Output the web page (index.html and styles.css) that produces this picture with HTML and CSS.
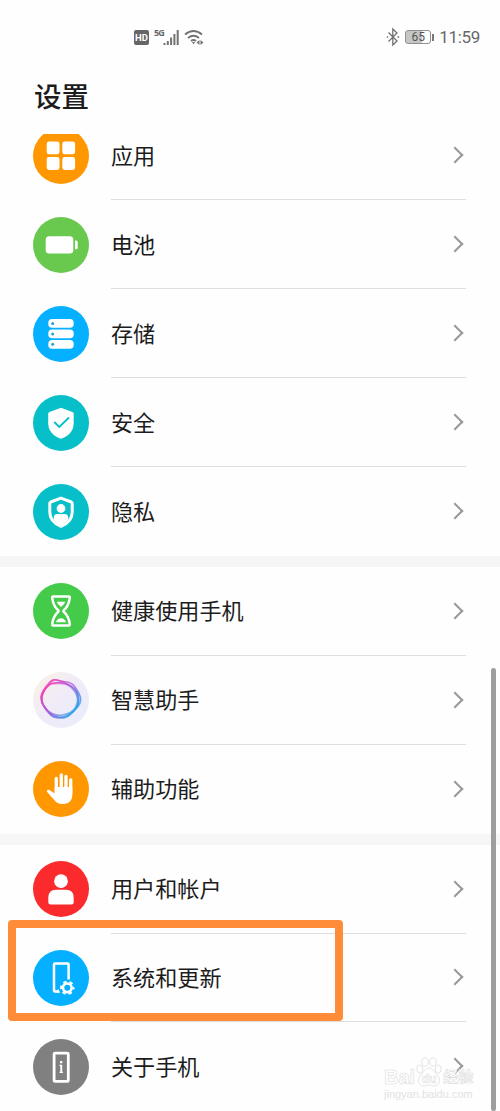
FILE: index.html
```html
<!DOCTYPE html>
<html lang="zh-CN">
<head>
  <meta charset="UTF-8" />
  <meta name="viewport" content="width=device-width, initial-scale=1.0" />
  <title>设置</title>
  <link rel="stylesheet" href="styles.css">
</head>
<body>

  <div class="screen">
    <div class="status-bar">
      <div class="status-left">
        <span class="hd">HD</span>
        <span class="net">5G</span>
        <svg class="signal" width="17" height="17" viewBox="0 0 17 17">
          <path d="M1.5 14v2M4.8 12v4M8.1 8.500v7.500M11.400 5v11M14.700 1v15" />
        </svg>
        <svg class="wifi" width="20" height="17" viewBox="0 0 20 17">
          <path d="M1 5.500Q9.500-1.500 18 5.500M4 9q5.500-4.500 11 0M7 12q2.500-2 5 0" />
          <path class="fill" d="M8 13h3l-1.500 2.500zM15.500 11v5l-3-2.500zM16.500 11v5l3-2.500z" />
        </svg>
      </div>
      <div class="status-right">
        <svg class="bluetooth" width="14" height="20" viewBox="0 0 14 20">
          <path d="M2.500 5.500l8.500 8.500-4.200 4V2L11 6l-8.500 8.500" />
          <path d="M.8 10h1.400M11.500 10h1.700" />
        </svg>
        <span class="battery"><span class="battery-level">65</span></span>
        <span class="time">11:59</span>
      </div>
    </div>

    <h1>设置</h1>

    <div class="list">
      <div class="group">
        <div class="row">
          <svg class="icon" viewBox="0 0 56 56">
            <circle cx="28" cy="28" r="28" fill="#ff9800" />
            <g fill="#fff">
              <rect x="13.700" y="13.500" width="12.800" height="12.800" rx="2.400" />
              <rect x="29.300" y="13.500" width="12.800" height="12.800" rx="2.400" />
              <rect x="13.700" y="29.100" width="12.800" height="12.800" rx="2.400" />
              <rect x="29.300" y="29.100" width="12.800" height="12.800" rx="2.400" />
            </g>
          </svg>
          <div class="item"><span>应用</span><i class="arrow"></i></div>
        </div>
        <div class="row">
          <svg class="icon" viewBox="0 0 56 56">
            <circle cx="28" cy="28" r="28" fill="#69c94f" />
            <rect x="12.700" y="19.200" width="27.600" height="17.400" rx="3.500" fill="#fff" />
            <path d="M42 23.500h1.200q1.500 0 1.500 1.500v5.700q0 1.500-1.500 1.500H42z" fill="#fff" />
          </svg>
          <div class="item"><span>电池</span><i class="arrow"></i></div>
        </div>
        <div class="row">
          <svg class="icon" viewBox="0 0 56 56">
            <circle cx="28" cy="28" r="28" fill="#04b0ff" />
            <g fill="#fff">
              <rect x="15.300" y="13" width="25.400" height="8.700" rx="3.800" />
              <rect x="15.300" y="23.500" width="25.400" height="8.700" rx="3.800" />
              <rect x="15.300" y="34" width="25.400" height="8.700" rx="3.800" />
            </g>
            <g fill="#2b9fce">
              <circle cx="19.700" cy="17.400" r="1.500" />
              <circle cx="19.700" cy="27.900" r="1.500" />
              <circle cx="19.700" cy="38.300" r="1.500" />
            </g>
          </svg>
          <div class="item"><span>存储</span><i class="arrow"></i></div>
        </div>
        <div class="row">
          <svg class="icon" viewBox="0 0 56 56">
            <circle cx="28" cy="28" r="28" fill="#06bfc8" />
            <path d="M28 12.700l11.400 4.200q1.300.5 1.300 1.800v9.500c0 8-5.500 13-12.700 15.600C20.800 41.200 15.200 36.200 15.200 28.200v-9.500q0-1.300 1.300-1.800z" fill="#fff" />
            <path d="M21.300 27l5 5 9.700-9.500" fill="none" stroke="#06bfc8" stroke-width="1.900" />
          </svg>
          <div class="item"><span>安全</span><i class="arrow"></i></div>
        </div>
        <div class="row">
          <svg class="icon" viewBox="0 0 56 56">
            <circle cx="28" cy="28" r="28" fill="#06bfc8" />
            <path d="M28 14.200l10.300 3.800q.9.400.9 1.400v8.900c0 7-4.600 11.400-11.200 14-6.600-2.600-11.200-7-11.200-14v-8.900q0-1 .9-1.400z" fill="none" stroke="#fff" stroke-width="3" />
            <circle cx="28" cy="24.500" r="4.400" fill="#fff" />
            <path d="M20.800 36v-2.500q0-3.500 3.500-3.500h7.400q3.500 0 3.500 3.500V36L28 42z" fill="#fff" />
          </svg>
          <div class="item"><span>隐私</span><i class="arrow"></i></div>
        </div>
      </div>

      <div class="group">
        <div class="row">
          <svg class="icon" viewBox="0 0 56 56">
            <circle cx="28" cy="28" r="28" fill="#43cb49" />
            <path d="M20.300 13.500h15.400q1.300 0 1.100 1.300c-.8 6.200-2.300 9.200-5.800 12.200q-1.200 1 0 2c3.500 3 5 6 5.800 12.200q.2 1.300-1.100 1.300H20.300q-1.300 0-1.100-1.300c.8-6.200 2.300-9.200 5.800-12.200q1.200-1 0-2c-3.500-3-5-6-5.800-12.200q-.2-1.300 1.100-1.300z" fill="none" stroke="#fff" stroke-width="2.500" />
            <path d="M23.800 18.800h8.400c-.6 2.200-2.300 3.500-4.200 5.200-1.900-1.700-3.600-3-4.200-5.200zM22.800 39.200c.7-2.200 2.600-4 5.200-4s4.500 1.800 5.200 4z" fill="#fff" />
          </svg>
          <div class="item"><span>健康使用手机</span><i class="arrow"></i></div>
        </div>
        <div class="row">
          <svg class="icon" viewBox="0 0 56 56">
            <defs>
              <linearGradient id="halo" x1="0" y1="0" x2="1" y2="1">
                <stop offset="0" stop-color="#faf2e2" />
                <stop offset=".45" stop-color="#f1ebf8" />
                <stop offset="1" stop-color="#e8edfb" />
              </linearGradient>
              <linearGradient id="ring" x1="0.100" y1="0.200" x2="0.900" y2="0.850">
                <stop offset="0" stop-color="#f043b8" />
                <stop offset=".45" stop-color="#a95bdc" />
                <stop offset="1" stop-color="#27a6ea" />
              </linearGradient>
            </defs>
            <circle cx="28" cy="28" r="28" fill="url(#halo)" />
            <g fill="none" stroke="url(#ring)">
              <path d="M17.500 9.500C21 6 24 8.500 31 9.500c7 .4 10 2.700 12.500 7.500 2.500 5 5.500 8 3.500 14-2 6.300-6 6.800-9.500 11.200-4 4.500-8 4-14 3.500-6.500-.5-7.500-5.500-11-10-4-5-6-9-3.500-14.500C11 16 13 14 17.500 9.500z" stroke-width="1.600" stroke-opacity=".8" />
              <path d="M21 8c4-.5 9 2 13.500 4 5 2.200 8.500 4.500 9.500 9.500 1 5 2.500 9-.5 14-3.500 5.500-8.500 9-15 9.500-6 .5-11-1.500-14.500-6-3-4-5.500-8-5.500-13.500 0-5 3-8 6-11.500 2-2.500 3.500-5.500 6.500-6z" stroke-width="1.800" stroke-opacity=".7" />
              <path d="M20 11.500c4 .5 7-1 12.500.5 5 1.500 7.500 4.500 10.500 9.500 3 5 2 9-.5 14-2.500 5-7.500 6.500-13 7.500-6 1-10-.5-14.500-4-4.500-3.500-6-7-6-12.500 0-5 2-8 4.500-11 2-2.500 4-4 6.500-4z" stroke-width="1.700" stroke-opacity=".7" />
              <path d="M17.500 12c5-2.500 10-2.500 16 0 6 2.500 12 7.500 12.500 14.500.5 7-5 14-11.500 17.500-6 3-13 1.500-17.500-3-4.500-4-9.500-8.500-8.500-14.500 1-5.500 4.500-11.500 9-14.500z" stroke-width="1.100" />
            </g>
          </svg>
          <div class="item"><span>智慧助手</span><i class="arrow"></i></div>
        </div>
        <div class="row">
          <svg class="icon" viewBox="0 0 56 56">
            <circle cx="28" cy="28" r="28" fill="#ff9800" />
            <g stroke="#fff" stroke-width="3.300" stroke-linecap="round">
              <path d="M23.300 17.500V33M28.300 14V31M33 15.300V31M37.700 18.800V33" />
            </g>
            <path d="M21.700 26h17.600v7.500c0 6-3.300 9.500-8.800 9.500-5 0-7.500-1.500-9.700-4.500l-6.600-7.400c-1.300-1.500.6-3.100 2.200-2.200l5.300 3.600z" fill="#fff" />
          </svg>
          <div class="item"><span>辅助功能</span><i class="arrow"></i></div>
        </div>
      </div>

      <div class="group">
        <div class="row">
          <svg class="icon" viewBox="0 0 56 56">
            <circle cx="28" cy="28" r="28" fill="#fa2a2d" />
            <circle cx="28" cy="20.200" r="6.900" fill="#fff" />
            <path d="M15.300 41v-4.500q0-7.700 7.700-7.700h10q7.700 0 7.700 7.700V41q0 2.500-2.500 2.500H17.800q-2.500 0-2.500-2.500z" fill="#fff" />
          </svg>
          <div class="item"><span>用户和帐户</span><i class="arrow"></i></div>
        </div>
        <div class="row">
          <svg class="icon" viewBox="0 0 56 56">
            <circle cx="28" cy="28" r="28" fill="#04b0ff" />
            <path d="M35.600 29.500V14.500q0-1-1-1H22q-1 0-1 1v26q0 1 1 1h4" fill="none" stroke="#fff" stroke-width="2.500" />
            <path d="M23.500 42.700v-2l2-1.700 1.500 3.700z" fill="#fff" />
            <circle cx="34.300" cy="37.800" r="4.300" fill="none" stroke="#fff" stroke-width="2.600" />
            <circle cx="34.300" cy="37.800" r="6.200" fill="none" stroke="#fff" stroke-width="2" stroke-dasharray="3.400 3.093" stroke-dashoffset="1.700" />
          </svg>
          <div class="item"><span>系统和更新</span><i class="arrow"></i></div>
        </div>
        <div class="row">
          <svg class="icon" viewBox="0 0 56 56">
            <circle cx="28" cy="28" r="28" fill="#808080" />
            <rect x="21.100" y="14.100" width="14.200" height="28.300" rx="1" fill="none" stroke="#fff" stroke-width="2.800" />
            <path d="M27 22h2.300v2.200H27zM26.500 25.800h2.700v6.900h.8v1.200h-3.500v-1.200h.8V27h-.8z" fill="#fff" />
          </svg>
          <div class="item"><span>关于手机</span><i class="arrow"></i></div>
        </div>
      </div>
    </div>

    <div class="highlight"></div>
    <div class="scrollbar"></div>

    <div class="watermark">
      <div class="watermark-logo">
        <span>Bai</span>
        <svg width="26" height="31" viewBox="0 0 26 31">
          <g>
            <ellipse cx="3.800" cy="12" rx="3" ry="4" />
            <ellipse cx="9" cy="5" rx="3.200" ry="4.200" />
            <ellipse cx="17" cy="5" rx="3.200" ry="4.200" />
            <ellipse cx="22.200" cy="12" rx="3" ry="4" />
            <path d="M13 11c4 0 5 4 8 7 4 4 3 11-3 11-3 0-3-1-5-1s-2 1-5 1c-6 0-7-7-3-11 3-3 4-7 8-7z" />
          </g>
          <text x="13" y="26" text-anchor="middle">du</text>
        </svg>
        <span class="watermark-cn">经验</span>
      </div>
      <div class="watermark-url">jingyan.baidu.com</div>
    </div>
  </div>

</body>
</html>
```

FILE: styles.css
```css
* {
  box-sizing: border-box;
}
body {
  margin: 0;
  background: #fefefe;
  color: #1c1c1c;
  font-family: "Noto Sans CJK SC", "Noto Sans", sans-serif;
}
.screen {
  position: relative;
  display: flex;
  flex-direction: column;
  width: 500px;
  height: 1111px;
  overflow: hidden;
}

/* status bar */
.status-bar {
  display: flex;
  justify-content: space-between;
  align-items: center;
  height: 74px;
  padding: 0 20px 0 134px;
  color: #686868;
  font-family: Roboto, sans-serif;
}
.status-left,
.status-right {
  display: flex;
  align-items: center;
}
.status-bar svg {
  fill: none;
  stroke: #727272;
}
.hd {
  width: 15px;
  height: 15px;
  border-radius: 2px;
  background: #666;
  color: #fff;
  font-size: 9.5px;
  font-weight: 700;
  line-height: 15px;
  text-align: center;
}
.net {
  align-self: flex-start;
  width: 9px;
  margin-left: 5px;
  font-family: "Open Sans", sans-serif;
  font-size: 9px;
  font-weight: 700;
  letter-spacing: -0.8px;
  line-height: 8px;
}
.signal {
  stroke-width: 2;
}
.wifi {
  margin-left: 4px;
  stroke-width: 1.8;
}
.status-bar .wifi .fill {
  fill: #727272;
  stroke: none;
}
.bluetooth {
  stroke-width: 1.3;
}
.battery {
  position: relative;
  width: 26px;
  height: 14px;
  margin: 0 8px 0 5px;
  border: 1px solid #909090;
  border-radius: 3px;
  background: linear-gradient(to right, #c6c6c6 65%, #fefefe 65%);
}
.battery::after {
  content: "";
  position: absolute;
  top: 3px;
  right: -4px;
  width: 2px;
  height: 7px;
  background: #777;
}
.battery-level {
  display: block;
  color: #555;
  font-size: 12px;
  line-height: 12px;
  text-align: center;
}
.time {
  font-size: 17px;
  letter-spacing: -0.3px;
  line-height: 20px;
}

h1 {
  height: 60px;
  margin: 0;
  padding-left: 34px;
  font-size: 27.5px;
  font-weight: 500;
  line-height: 42px;
}

/* the list is scrolled, so its first row is cut by the header */
.list {
  flex: 1;
  overflow: hidden;
}
.group {
  border-bottom: 11px solid #f6f6f6;
}
.group:first-child {
  margin-top: -22.5px;
}
.group:last-child {
  border-bottom: none;
}
.row {
  display: flex;
  align-items: center;
  height: 88.9px;
  padding: 0 34px 0 33px;
}
.icon {
  flex: none;
  width: 56px;
  height: 56px;
  margin-right: 22px;
}
.item {
  flex: 1;
  display: flex;
  justify-content: space-between;
  align-items: center;
  height: 100%;
  padding-right: 5px;
  border-bottom: 1px solid #dedede;
  font-size: 22.1px;
}
.item span {
  margin-top: -3px;
}
.row:last-child .item {
  border-bottom-color: transparent;
}
.arrow {
  width: 12px;
  height: 12px;
  border-top: 2px solid #999;
  border-right: 2px solid #999;
  transform: rotate(45deg);
}

.highlight {
  position: absolute;
  left: 8px;
  top: 920px;
  width: 335px;
  height: 101px;
  border: 8px solid #ff8c38;
  border-radius: 4px;
}
.scrollbar {
  position: absolute;
  left: 491px;
  top: 668px;
  width: 5px;
  height: 443px;
  border-radius: 3px;
  background: #9e9e9e;
}

/* watermark */
.watermark {
  position: absolute;
  left: 384px;
  top: 1056px;
  width: 92px;
  color: #fff;
  font-family: "Liberation Sans", "Noto Sans CJK SC", sans-serif;
  -webkit-text-stroke: 0.6px #dcdcdc;
}
.watermark-logo {
  display: flex;
  align-items: flex-end;
  height: 32px;
  font-size: 20px;
  font-weight: 700;
  line-height: 22px;
}
.watermark-logo svg {
  flex: none;
  margin: 0 1px;
  fill: #fff;
  stroke: #dcdcdc;
  stroke-width: 0.8;
}
.watermark-logo text {
  font-size: 12px;
  stroke-width: 0.6;
}
.watermark-cn {
  font-size: 15px;
  white-space: nowrap;
}
.watermark-url {
  color: #e2e2e2;
  font-size: 11px;
  line-height: 12px;
  -webkit-text-stroke: 0;
}
```
